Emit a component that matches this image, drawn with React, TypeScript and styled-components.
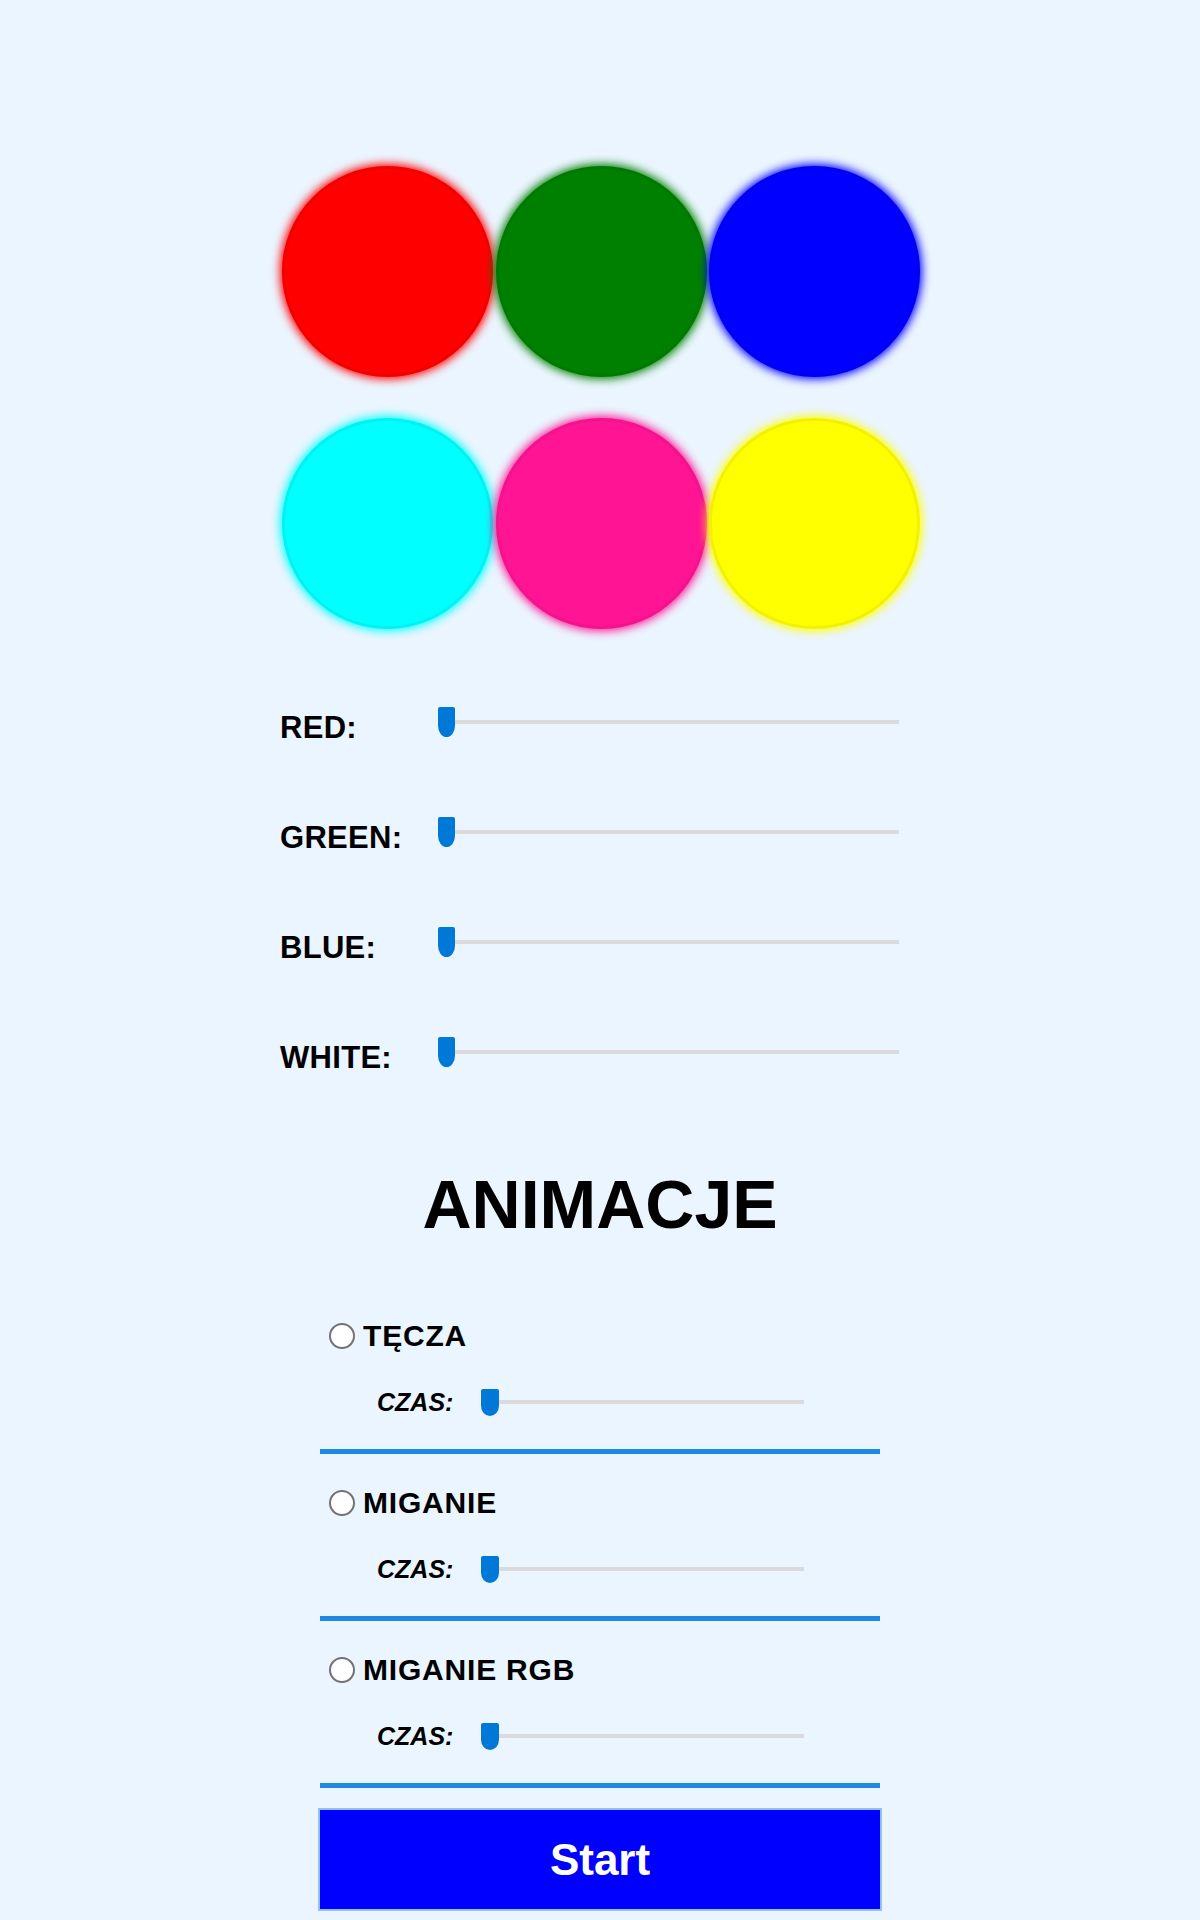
import React from "react";
import styled, { createGlobalStyle } from "styled-components";

const GlobalStyle = createGlobalStyle`
  html, body {
    margin: 0;
    padding: 0;
    background: #ebf5ff;
  }
  body {
    font-family: "Liberation Sans", Arial, sans-serif;
    color: #000;
  }
  * { box-sizing: border-box; }
`;

const Page = styled.main`
  display: flex;
  flex-direction: column;
  align-items: center;
  padding-top: 166px;
  min-height: 1920px;
`;

const LampGrid = styled.div`
  display: grid;
  grid-template-columns: repeat(3, 211px);
  column-gap: 2.5px;
  row-gap: 41px;
  margin-left: 2px;
`;

const Lamp = styled.div<{ $color: string }>`
  width: 211px;
  height: 211px;
  border-radius: 50%;
  background: ${(p) => p.$color};
  box-shadow: 0 0 10px 2px ${(p) => p.$color},
    inset 0 0 0 3px rgba(0, 0, 0, 0.05);
`;

const SliderList = styled.section`
  width: 640px;
  margin-top: 38px;
  display: flex;
  flex-direction: column;
`;

const SliderRow = styled.div`
  display: flex;
  align-items: center;
  height: 110px;
`;

const ChannelLabel = styled.label`
  width: 158px;
  font-size: 31px;
  font-weight: 700;
  line-height: 35px;
  margin-top: 10px;
  letter-spacing: 0.3px;
`;

const Range = styled.input.attrs({ type: "range", min: 0, max: 255, defaultValue: 0 })<{
  $width: number;
  $thumbW: number;
  $thumbH: number;
}>`
  -webkit-appearance: none;
  appearance: none;
  width: ${(p) => p.$width}px;
  height: ${(p) => p.$thumbH}px;
  margin: 0;
  padding: 0;
  background: transparent;
  outline: none;

  &::-webkit-slider-runnable-track {
    height: 4px;
    background: #dadada;
    border: none;
    border-radius: 1px;
  }
  &::-webkit-slider-thumb {
    -webkit-appearance: none;
    appearance: none;
    width: ${(p) => p.$thumbW}px;
    height: ${(p) => p.$thumbH}px;
    margin-top: ${(p) => (4 - p.$thumbH) / 2}px;
    background: #0078d7;
    border: none;
    border-radius: 2px 2px 50% 50% / 2px 2px 38% 38%;
  }
`;

const Heading = styled.h2`
  margin: 63px 0 0;
  font-size: 68px;
  line-height: 68px;
  font-weight: 700;
  letter-spacing: 0;
`;

const AnimList = styled.section`
  width: 560px;
  margin-top: 49px;
  display: flex;
  flex-direction: column;
`;

const AnimSection = styled.div`
  padding-top: 31px;
  padding-bottom: 32px;
  border-bottom: 5px solid #1e88e5;
  display: flex;
  flex-direction: column;
  gap: 33px;
`;

const OptionRow = styled.label`
  display: flex;
  align-items: center;
  gap: 8px;
  padding-left: 9px;
  height: 36px;
`;

const Radio = styled.input.attrs({ type: "radio", name: "anim" })`
  -webkit-appearance: none;
  appearance: none;
  width: 26px;
  height: 26px;
  margin: 0;
  border-radius: 50%;
  border: 2.5px solid #727272;
  background: #fff;
  flex: none;
`;

const OptionName = styled.span`
  font-size: 30px;
  font-weight: 700;
  line-height: 36px;
  letter-spacing: 0.8px;
`;

const TimeRow = styled.div`
  display: flex;
  align-items: center;
  height: 30px;
  padding-left: 57px;
`;

const TimeLabel = styled.span`
  width: 104px;
  font-size: 25px;
  font-style: italic;
  font-weight: 700;
  line-height: 30px;
`;

const StartButton = styled.button`
  width: 564px;
  height: 103px;
  margin-top: 20px;
  background: #0000ff;
  border: 2px solid #93c0ef;
  color: #fff;
  font-family: "Liberation Sans", Arial, sans-serif;
  font-size: 44px;
  font-weight: 700;
  cursor: pointer;
`;

const lamps = ["#ff0000", "#008000", "#0000ff", "#00ffff", "#ff1493", "#ffff00"];
const channels = ["RED:", "GREEN:", "BLUE:", "WHITE:"];
const animations = ["TĘCZA", "MIGANIE", "MIGANIE RGB"];

export default function App() {
  return (
    <>
      <GlobalStyle />
      <Page>
        <LampGrid>
          {lamps.map((c) => (
            <Lamp key={c} $color={c} />
          ))}
        </LampGrid>

        <SliderList>
          {channels.map((ch) => (
            <SliderRow key={ch}>
              <ChannelLabel>{ch}</ChannelLabel>
              <Range $width={461} $thumbW={17} $thumbH={30} />
            </SliderRow>
          ))}
        </SliderList>

        <Heading>ANIMACJE</Heading>

        <AnimList>
          {animations.map((a) => (
            <AnimSection key={a}>
              <OptionRow>
                <Radio />
                <OptionName>{a}</OptionName>
              </OptionRow>
              <TimeRow>
                <TimeLabel>CZAS:</TimeLabel>
                <Range $width={323} $thumbW={18} $thumbH={27} />
              </TimeRow>
            </AnimSection>
          ))}
        </AnimList>

        <StartButton>Start</StartButton>
      </Page>
    </>
  );
}
